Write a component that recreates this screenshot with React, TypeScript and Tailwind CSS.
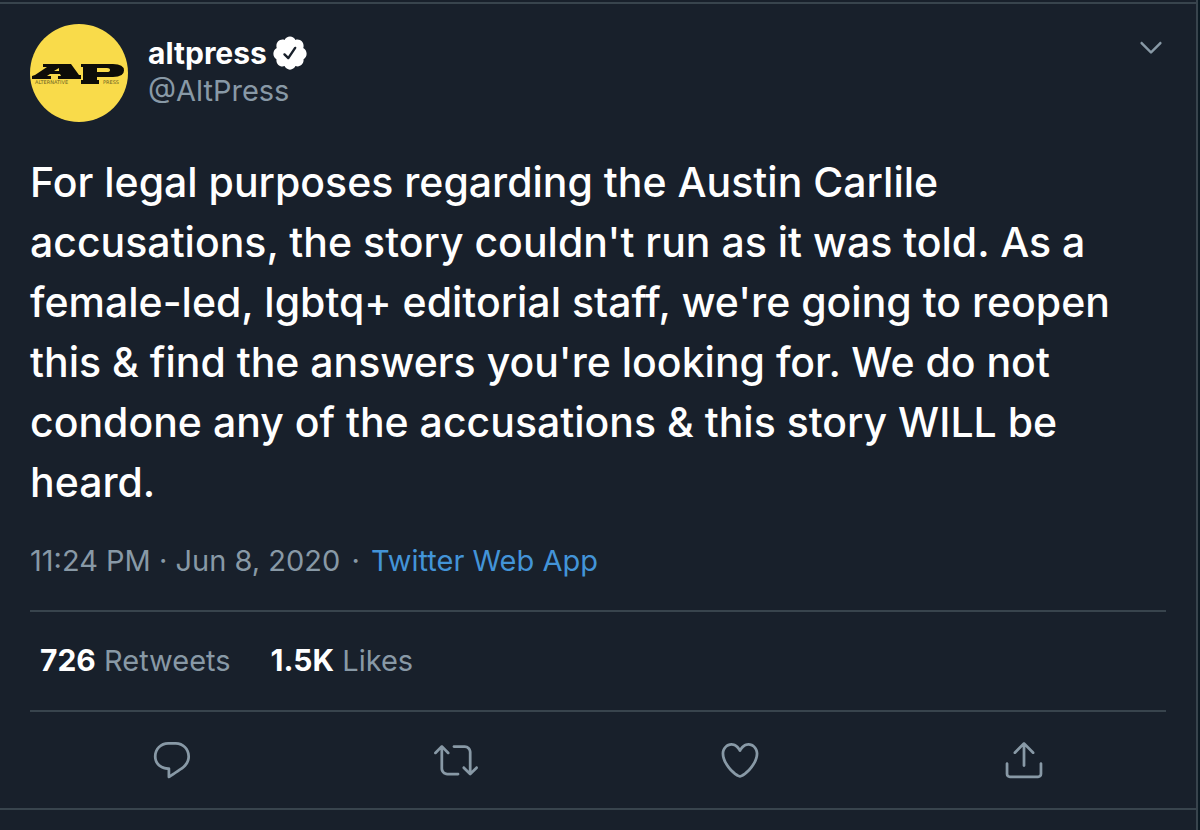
import type { ReactNode } from 'react'

const icons = {
  reply:
    'M14.046 2.242l-4.148-.01h-.002c-4.374 0-7.8 3.427-7.8 7.802 0 4.098 3.186 7.206 7.465 7.37v3.828c0 .108.044.286.12.403.142.225.384.347.632.347.138 0 .277-.038.402-.118.264-.168 6.473-4.14 8.088-5.506 1.902-1.61 3.04-3.97 3.043-6.312v-.017c-.006-4.367-3.43-7.787-7.8-7.788zm3.787 12.972c-1.134.96-4.862 3.405-6.772 4.643V16.67c0-.414-.335-.75-.75-.75h-.396c-3.66 0-6.318-2.476-6.318-5.886 0-3.534 2.768-6.302 6.3-6.302l4.147.01h.002c3.532 0 6.3 2.766 6.302 6.296-.003 1.91-.942 3.844-2.514 5.176z',
  retweet:
    'M23.77 15.67c-.292-.293-.767-.293-1.06 0l-2.22 2.22V7.65c0-2.068-1.683-3.75-3.75-3.75h-5.85c-.414 0-.75.336-.75.75s.336.75.75.75h5.85c1.24 0 2.25 1.01 2.25 2.25v10.24l-2.22-2.22c-.293-.293-.768-.293-1.06 0s-.294.768 0 1.06l3.5 3.5c.145.147.337.22.53.22s.383-.072.53-.22l3.5-3.5c.294-.292.294-.767 0-1.06zm-10.66 3.28H7.26c-1.24 0-2.25-1.01-2.25-2.25V6.46l2.22 2.22c.148.147.34.22.532.22s.384-.073.53-.22c.293-.293.293-.768 0-1.06l-3.5-3.5c-.293-.294-.768-.294-1.06 0l-3.5 3.5c-.294.292-.294.767 0 1.06s.767.293 1.06 0l2.22-2.22V16.7c0 2.068 1.683 3.75 3.75 3.75h5.85c.414 0 .75-.336.75-.75s-.337-.75-.75-.75z',
  like:
    'M12 21.638h-.014C9.403 21.59 1.95 14.856 1.95 8.478c0-3.064 2.525-5.754 5.403-5.754 2.29 0 3.83 1.58 4.646 2.73.814-1.148 2.354-2.73 4.645-2.73 2.88 0 5.404 2.69 5.404 5.755 0 6.376-7.454 13.11-10.037 13.157H12zM7.354 4.225c-2.08 0-3.903 1.988-3.903 4.255 0 5.74 7.034 11.596 8.55 11.658 1.518-.062 8.55-5.917 8.55-11.658 0-2.267-1.823-4.255-3.903-4.255-2.528 0-3.94 2.936-3.952 2.965-.23.562-1.156.562-1.387 0-.014-.03-1.425-2.965-3.954-2.965z',
  share:
    'M17.53 7.47l-5-5c-.293-.293-.768-.293-1.06 0l-5 5c-.294.293-.294.768 0 1.06s.767.294 1.06 0l3.72-3.72V15c0 .414.336.75.75.75s.75-.336.75-.75V4.81l3.72 3.72c.146.147.338.22.53.22s.384-.072.53-.22c.293-.293.293-.767 0-1.06zM19.708 21.944H4.292C3.028 21.944 2 20.916 2 19.652V14c0-.414.336-.75.75-.75s.75.336.75.75v5.652c0 .437.355.792.792.792h15.416c.437 0 .792-.355.792-.792V14c0-.414.336-.75.75-.75s.75.336.75.75v5.652c0 1.264-1.028 2.292-2.292 2.292z',
  chevron:
    'M20.207 8.147c-.39-.39-1.023-.39-1.414 0L12 14.94 5.207 8.147c-.39-.39-1.023-.39-1.414 0-.39.39-.39 1.023 0 1.414l7.5 7.5c.195.196.45.294.707.294s.512-.098.707-.293l7.5-7.5c.39-.39.39-1.022 0-1.413z',
  verified:
    'M22.5 12.5c0-1.58-.875-2.95-2.148-3.6.154-.435.238-.905.238-1.4 0-2.21-1.71-3.998-3.818-3.998-.47 0-.92.084-1.336.25C14.818 2.415 13.51 1.5 12 1.5s-2.816.917-3.437 2.25c-.415-.165-.866-.25-1.336-.25-2.11 0-3.818 1.79-3.818 4 0 .494.083.964.237 1.4-1.272.65-2.147 2.018-2.147 3.6 0 1.495.782 2.798 1.942 3.486-.02.17-.032.34-.032.514 0 2.21 1.708 4 3.818 4 .47 0 .92-.086 1.335-.25.62 1.334 1.926 2.25 3.437 2.25 1.512 0 2.818-.916 3.437-2.25.415.163.865.248 1.336.248 2.11 0 3.818-1.79 3.818-4 0-.174-.012-.344-.033-.513 1.158-.687 1.943-1.99 1.943-3.484zm-6.616-3.334l-4.334 6.5c-.145.217-.382.334-.625.334-.143 0-.288-.04-.416-.126l-.115-.094-2.415-2.415c-.293-.293-.293-.768 0-1.06s.768-.294 1.06 0l1.77 1.767 3.825-5.74c.23-.345.696-.436 1.04-.207.346.23.44.696.21 1.04z',
}

function Icon({ name, className }: { name: keyof typeof icons; className: string }) {
  return (
    <svg viewBox="0 0 24 24" fill="currentColor" aria-hidden="true" className={className}>
      <path d={icons[name]} />
    </svg>
  )
}

function Stat({ value, children }: { value: string; children: ReactNode }) {
  return (
    <a href="#">
      <span className="text-[30px] leading-none font-bold text-white">{value}</span> {children}
    </a>
  )
}

function Avatar() {
  return (
    <svg viewBox="0 0 98 98" className="size-[98px] shrink-0" role="img" aria-label="altpress">
      <circle cx="49" cy="49" r="49" fill="#f9db4a" />
      {/* wide slab logo mark */}
      <g fill="#0d0d08" fillRule="evenodd">
        <path d="M13 40H41L49 51H51V55H28V52H31L30 50H20L17 52H21V55H2V52L5 51L17 43H13ZM29 44L24 47H29Z" />
        <path d="M51 40H83Q94 40 94 46.500Q94 53 83 53H67V56H69V60H51V56H53V43H51ZM67 44V48H77Q80 48 80 46Q80 44 77 44Z" />
      </g>
      <g fill="#6b6024" className="font-['DejaVu_Sans',sans-serif] text-[5px]">
        <text x="5" y="60">ALTERNATIVE</text>
        <text x="73" y="60">PRESS</text>
      </g>
    </svg>
  )
}

const actions = [
  { icon: 'reply', label: 'Reply' },
  { icon: 'retweet', label: 'Retweet' },
  { icon: 'like', label: 'Like' },
  { icon: 'share', label: 'Share' },
] as const

export default function App() {
  return (
    <div className="flex min-h-screen bg-[#0b1a23] pr-[2px] font-['Inter',sans-serif] text-[29px] leading-[38px] text-[#8899a6]">
      <main className="flex-1 border-r-2 border-[#38444d] bg-[#18202b] pt-[2px]">
        <article className="border-y-2 border-[#38444d] px-[30px]">
          <header className="flex gap-5 pt-5">
            <Avatar />
            <div className="flex-1 pt-[10px]">
              <div className="flex items-center gap-1">
                <a href="#" className="text-[30px] leading-[38px] font-bold text-white">altpress</a>
                <Icon name="verified" className="size-[38px] text-white" />
              </div>
              <a href="#">@AltPress</a>
            </div>
            <button type="button" aria-label="More" className="mt-2 size-[30px]">
              <Icon name="chevron" className="size-[30px]" />
            </button>
          </header>

          <p className="pt-[30px] text-[41px] leading-[60px] font-medium text-white">
            For legal purposes regarding the Austin Carlile accusations, the story couldn't run as it was told. As a
            female-led, lgbtq+ editorial staff, we're going to reopen this &amp; find the answers you're looking for. We do
            not condone any of the accusations &amp; this story WILL be heard.
          </p>

          <div className="py-[30px]">
            <a href="#">11:24 PM · Jun 8, 2020</a>
            <span className="px-[3px]"> · </span>
            <a href="#" className="text-[#4394d8]">Twitter Web App</a>
          </div>

          <div className="flex gap-10 border-y-2 border-[#38444d] px-[10px] py-[30px]">
            <Stat value="726">Retweets</Stat>
            <Stat value="1.5K">Likes</Stat>
          </div>

          <div className="flex h-24 items-center">
            {actions.map(({ icon, label }) => (
              <div key={icon} className="flex flex-1 justify-center">
                <button type="button" aria-label={label}>
                  <Icon name={icon} className="size-[44px]" />
                </button>
              </div>
            ))}
          </div>
        </article>
      </main>
    </div>
  )
}
